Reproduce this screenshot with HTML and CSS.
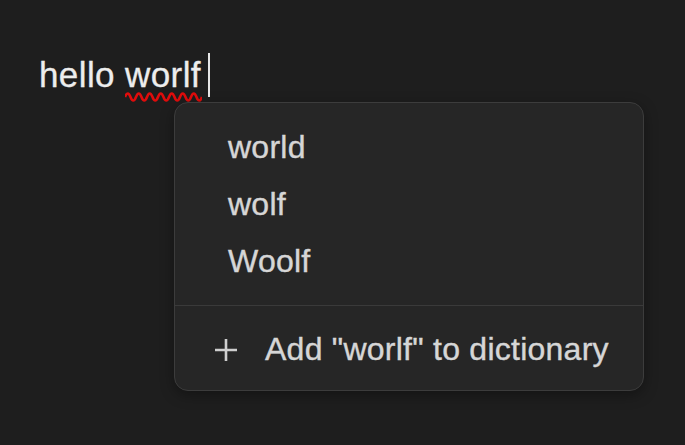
FILE: index.html
```html
<!DOCTYPE html>
<html lang="en">
  <head>
    <meta charset="UTF-8" />
    <meta name="viewport" content="width=device-width, initial-scale=1.0" />
    <title>Spell check</title>
    <link rel="stylesheet" href="styles.css">
  </head>
  <body>
    <div class="editor">
      <p class="line">hello <span class="misspelled">worlf<svg class="squiggle" width="77" height="10" viewBox="0 0 77 10">
            <path d="M0 5 Q2.75 -2 5.5 5 T11 5 T16.5 5 T22 5 T27.5 5 T33 5 T38.5 5 T44 5 T49.5 5 T55 5 T60.5 5 T66 5 T71.5 5 T77 5" stroke="#e00c0c" stroke-width="2.6" fill="none" />
          </svg></span><span class="caret"></span></p>

      <div class="menu">
        <ul class="suggestions">
          <li>world</li>
          <li>wolf</li>
          <li>Woolf</li>
        </ul>
        <div class="add-word">
          <svg class="plus" width="24" height="24" viewBox="0 0 24 24">
            <path d="M12 1v22M1 12h22" stroke="currentColor" stroke-width="2.6" fill="none" />
          </svg>
          <span>Add "worlf" to dictionary</span>
        </div>
      </div>
    </div>
  </body>
</html>
```

FILE: styles.css
```css
html,
body {
  height: 100%;
}
body {
  background-color: #1e1e1e;
  color: #d6d6d6;
  font-family: "Liberation Sans", Arial, sans-serif;
  margin: 0;
}
.editor {
  position: relative;
  padding: 53px 0 0 39px;
}
.line {
  margin: 0;
  font-size: 35px;
  line-height: 44px;
  letter-spacing: 0.4px;
  color: #ededed;
  -webkit-text-stroke: 0.3px #ededed;
  display: flex;
  align-items: stretch;
  white-space: pre;
}
.misspelled {
  position: relative;
}
.squiggle {
  position: absolute;
  left: 0;
  top: 39px;
}
.caret {
  width: 2px;
  margin-left: 7px;
  background-color: #e6e6e6;
}
.menu {
  position: absolute;
  top: 102px;
  left: 174px;
  width: 468px;
  background-color: #262626;
  border: 1px solid #3c3c3c;
  border-radius: 14px;
  box-shadow: 0 4px 14px rgba(0, 0, 0, 0.35);
  font-size: 32px;
  line-height: 57px;
  letter-spacing: 0.25px;
  -webkit-text-stroke: 0.4px #d6d6d6;
}
.suggestions {
  list-style: none;
  margin: 0;
  padding: 16px 0 15px 53px;
  border-bottom: 1px solid #3a3a3a;
}
.add-word {
  display: flex;
  align-items: center;
  gap: 27px;
  padding: 15px 0 12px 39px;
}
.plus {
  color: #cfcfcf;
  flex: none;
}
```
